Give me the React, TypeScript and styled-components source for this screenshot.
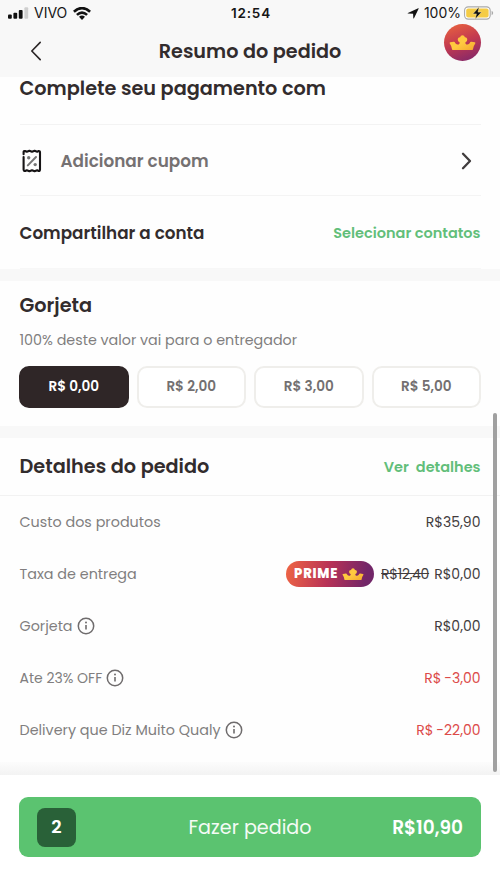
import React from 'react';
import styled, { createGlobalStyle } from 'styled-components';

const GlobalStyle = createGlobalStyle`
  * { box-sizing: border-box; }
  body { margin: 0; background: #fff; }
  button { font: inherit; border: 0; padding: 0; background: none; }
  svg { display: block; flex: none; }
`;

const Screen = styled.div`
  position: relative;
  display: flex;
  flex-direction: column;
  width: 500px;
  height: 889px;
  overflow: hidden;
  background: #fefefe;
  color: #322c2d;
  font-family: Poppins, Inter, sans-serif;
  white-space: pre;
`;

const Top = styled.header`
  position: relative;
  flex: none;
  height: 77px;
  background: #f8f8f8;
`;

const StatusBar = styled.div`
  display: grid;
  grid-template-columns: 1fr auto 1fr;
  align-items: center;
  height: 26px;
  padding: 0 6px 0 8px;
  color: #161616;
  font: 400 14px/26px Inter, sans-serif;
`;

const StatusGroup = styled.div<{ $end?: boolean }>`
  display: flex;
  align-items: center;
  justify-content: ${(p) => (p.$end ? 'flex-end' : 'flex-start')};
`;

const Carrier = styled.span`
  margin: 0 6px 0 5px;
`;

const Clock = styled.span`
  font-weight: 600;
  font-size: 13.5px;
  letter-spacing: 0.8px;
`;

const Charge = styled.span`
  margin: 0 3px 0 5px;
`;

const NavBar = styled.div`
  display: grid;
  grid-template-columns: 60px 1fr 60px;
  align-items: center;
  height: 51px;
`;

const BackButton = styled.button`
  display: flex;
  padding: 0 0 2px 29px;
`;

const PageTitle = styled.h1`
  margin: 0;
  text-align: center;
  font-size: 19.2px;
  line-height: 28px;
  font-weight: 600;
`;

const PrimeAvatar = styled.div`
  position: absolute;
  top: 24px;
  right: 19px;
  display: grid;
  place-items: center;
  width: 37px;
  height: 37px;
  border-radius: 50%;
  background: linear-gradient(160deg, #e8613f 5%, #c33a50 48%, #82276a 95%);
`;

const Content = styled.main`
  flex: none;
  height: 698px;
`;

const Section = styled.section`
  padding: 0 19.5px;
`;

const PaymentTitle = styled.h2`
  margin: 0;
  height: 48px;
  border-bottom: 1px solid #f3f3f3;
  font-size: 19.25px;
  line-height: 23px;
  font-weight: 600;
`;

const CouponRow = styled.div`
  display: flex;
  align-items: center;
  height: 71px;
  padding: 1px 8px 0 2px;
  border-bottom: 1px solid #f4f4f4;
`;

const CouponLabel = styled.span`
  flex: 1;
  margin-left: 19px;
  color: #757172;
  font-size: 16.85px;
  font-weight: 600;
`;

const ShareRow = styled.div`
  display: flex;
  align-items: center;
  justify-content: space-between;
  height: 73px;
  padding-top: 2px;
  border-bottom: 1px solid #f7f7f7;
  font-size: 16.8px;
  line-height: 24px;
  font-weight: 600;
`;

const LinkButton = styled.button`
  color: #62be7a;
  font-size: 14.5px;
  line-height: 22px;
  font-weight: 600;
  white-space: pre;
`;

const Separator = styled.div`
  height: 12px;
  background: #f8f8f8;
`;

const SectionTitle = styled.h2`
  margin: 0;
  font-size: 19.25px;
  line-height: 28px;
  font-weight: 600;
`;

const TipSection = styled(Section)`
  height: 145px;
  padding-top: 11px;
`;

const TipHint = styled.p`
  margin: 9px 0 15px;
  color: #817e7f;
  font-size: 14.3px;
  line-height: 22px;
`;

const TipOptions = styled.div`
  display: grid;
  grid-template-columns: repeat(4, 1fr);
  gap: 8px;
  margin: 0 -0.5px;
`;

const TipButton = styled.button<{ $selected?: boolean }>`
  height: 42px;
  border: 2px solid ${(p) => (p.$selected ? '#2f2627' : '#efeeeb')};
  border-radius: 10px;
  background: ${(p) => (p.$selected ? '#2f2627' : '#fff')};
  color: ${(p) => (p.$selected ? '#fff' : '#737071')};
  font-size: 13.6px;
  line-height: 20px;
  font-weight: 600;
`;

const DetailsHeader = styled.div`
  display: flex;
  align-items: center;
  justify-content: space-between;
  height: 58px;
  padding: 1px 19.5px 0;
  border-bottom: 1px solid #f2f2f2;
`;

const CostList = styled.div`
  height: 266px;
  padding: 0 19.5px;
`;

const CostRow = styled.div`
  display: flex;
  align-items: center;
  height: 52px;
  font-size: 14px;
  line-height: 22px;
`;

const CostLabel = styled.span<{ $tight?: boolean }>`
  display: flex;
  align-items: center;
  gap: 4px;
  flex: 1;
  color: #817e7f;
  font-size: ${(p) => (p.$tight ? 14 : 14.35)}px;
`;

const CostValue = styled.span<{ $discount?: boolean }>`
  color: ${(p) => (p.$discount ? '#dc4a49' : '#423c3d')};
  word-spacing: ${(p) => (p.$discount ? '-1px' : 'normal')};
`;

const OldPrice = styled.s`
  margin: 0 5px 0 7px;
  color: #423c3d;
  letter-spacing: -0.3px;
`;

const PrimeTag = styled.span`
  display: flex;
  align-items: center;
  gap: 4px;
  width: 88px;
  height: 26px;
  padding-left: 8px;
  border-radius: 13px;
  background: linear-gradient(100deg, #ef6544 0%, #b83256 48%, #722668 90%);
  color: #fff;
  font-size: 13px;
  font-weight: 800;
  letter-spacing: 0.8px;
`;

const FooterShade = styled.div`
  height: 13px;
  background: linear-gradient(#fcfcfc, #f3f3f3);
`;

const Footer = styled.footer`
  flex: 1;
  padding: 22px 19px 0;
  background: #fff;
`;

const OrderButton = styled.button`
  display: grid;
  grid-template-columns: 120px 1fr 120px;
  align-items: center;
  width: 462px;
  height: 60px;
  padding: 0 18px;
  border-radius: 9px;
  background: #5bc370;
  color: #fff;
  line-height: 28px;
`;

const ItemCount = styled.span`
  display: grid;
  place-items: center;
  width: 39px;
  height: 39px;
  border-radius: 8px;
  background: #296138;
  font-size: 18px;
  font-weight: 600;
`;

const OrderLabel = styled.span`
  padding-top: 2px;
  color: #f4fbf5;
  font-size: 19.15px;
`;

const OrderTotal = styled.span`
  padding-top: 2px;
  text-align: right;
  font-size: 18.5px;
  font-weight: 600;
`;

const ScrollThumb = styled.div`
  position: absolute;
  top: 413px;
  right: 3px;
  width: 4px;
  height: 359px;
  border-radius: 2px;
  background: #a0a0a0;
`;

const Crown = ({ width }: { width: number }) => (
  <svg width={width} height={(width * 16) / 28} viewBox="0 0 28 16">
    <defs>
      <linearGradient id="gold" x1="0" y1="0" x2="1" y2="1">
        <stop offset="0" stopColor="#ffc53a" />
        <stop offset="0.5" stopColor="#ffca40" />
        <stop offset="1" stopColor="#f5a52e" />
      </linearGradient>
    </defs>
    <path
      fill="url(#gold)"
      d="M1.2 7.6 4.9 7Q6 6.9 6.3 8Q7 9.8 8.8 9.8H10Q11.4 9.2 10.9 7.6Q8.4 6.4 9.3 3.6Q10 2.5 11.5 2.4Q12 .2 14 .2T16.5 2.4Q18 2.5 18.7 3.6Q19.6 6.4 17.1 7.6Q16.6 9.2 18 9.8H19.2Q21 9.8 21.7 8Q22 6.9 23.1 7L26.8 7.6Q27.7 8 27.1 9Q25.4 11.2 25 14.2Q24.8 15.8 23.5 15.8H4.5Q3.2 15.8 3 14.2Q2.6 11.2.9 9Q.3 8 1.2 7.6Z"
    />
  </svg>
);

const SignalIcon = () => (
  <svg width="21" height="12" viewBox="0 0 21 12" fill="#111">
    <rect x="0" y="7.6" width="3.8" height="4.2" rx="1" />
    <rect x="5.4" y="5.8" width="3.8" height="6" rx="1" />
    <rect x="10.8" y="3" width="3.8" height="8.8" rx="1" />
    <rect x="16.4" y="0.2" width="3.8" height="11.6" rx="1" fill="#cfcfcf" />
  </svg>
);

const WifiIcon = () => (
  <svg width="18" height="13" viewBox="0 0 18 13">
    <g fill="none" stroke="#111" strokeWidth="2.6">
      <path d="M.9 4.8Q9-2.6 17.1 4.8" />
      <path d="M3.9 7.9Q9 3.3 14.1 7.9" />
    </g>
    <path d="M6 9.8Q9 7.4 12 9.8L9 12.9Z" fill="#111" />
  </svg>
);

const LocationIcon = () => (
  <svg width="12" height="11" viewBox="0 0 12 11">
    <path d="M11.2.3Q11.9 0 11.6.8L7 10.3Q6.5 11 6.3 10.1L6.1 5.8 1 5.6Q.1 5.3.9 4.9Z" fill="#111" />
  </svg>
);

const BatteryIcon = () => (
  <svg width="30" height="14" viewBox="0 0 30 14">
    <rect x="0.6" y="0.9" width="25.6" height="12.2" rx="3.6" fill="#fff" stroke="#a9a9a9" strokeWidth="1.1" />
    <rect x="2.2" y="2.5" width="22.4" height="9" rx="2" fill="#f5cc45" />
    <path d="M27.6 4.8Q29.2 5.5 29.2 7T27.6 9.2Z" fill="#a9a9a9" />
    <path d="M15.2.8 8.8 7.9H12.4L11.2 13.2 17.6 6.1H14Z" fill="#111" stroke="#fbe9b0" strokeWidth=".5" />
  </svg>
);

const BackIcon = () => (
  <svg width="14" height="20" viewBox="0 0 14 20">
    <path d="M11.2 1.4 2.8 10 11.2 18.6" fill="none" stroke="#2b2627" strokeWidth="1.6" strokeLinecap="round" strokeLinejoin="round" />
  </svg>
);

const CouponIcon = () => (
  <svg width="20" height="24" viewBox="0 0 20 24" fill="none" strokeLinecap="round" strokeLinejoin="round">
    <path
      d="M1.6 5.2V3.1Q1.6 1.8 3 2L4.8 2.8 7.4 1.8 10 2.8 12.6 1.8 15.2 2.8 16.6 2Q18 1.8 18 3.4V20.6Q18 22.2 16.6 22L15.2 21.2 12.6 22.2 10 21.2 7.4 22.2 4.8 21.2 3.2 22Q1.6 22.2 1.6 20.6V8"
      stroke="#161415"
      strokeWidth="2.1"
    />
    <path d="M5.8 16.4 14 8" stroke="#777" strokeWidth="2" />
    <circle cx="6.7" cy="8.8" r="1.7" fill="#777" />
    <circle cx="13.2" cy="15.6" r="1.7" fill="#777" />
  </svg>
);

const ChevronIcon = () => (
  <svg width="12" height="20" viewBox="0 0 12 20">
    <path d="M2 2.8 9 10 2 17.2" fill="none" stroke="#403c3d" strokeWidth="2.3" strokeLinecap="round" strokeLinejoin="round" />
  </svg>
);

const InfoIcon = () => (
  <svg width="18" height="18" viewBox="0 0 18 18">
    <circle cx="9" cy="9" r="7.7" fill="none" stroke="#6f6c6d" strokeWidth="1.5" />
    <path d="M9 8V12.6" stroke="#6f6c6d" strokeWidth="1.6" />
    <circle cx="9" cy="5.6" r="1" fill="#6f6c6d" />
  </svg>
);

const tips = ['R$ 0,00', 'R$ 2,00', 'R$ 3,00', 'R$ 5,00'];

export default function App() {
  return (
    <Screen>
      <GlobalStyle />
      <Top>
        <StatusBar>
          <StatusGroup>
            <SignalIcon />
            <Carrier>VIVO</Carrier>
            <WifiIcon />
          </StatusGroup>
          <Clock>12:54</Clock>
          <StatusGroup $end>
            <LocationIcon />
            <Charge>100%</Charge>
            <BatteryIcon />
          </StatusGroup>
        </StatusBar>
        <NavBar>
          <BackButton aria-label="Voltar"><BackIcon /></BackButton>
          <PageTitle>Resumo do pedido</PageTitle>
        </NavBar>
        <PrimeAvatar><Crown width={27} /></PrimeAvatar>
      </Top>

      <Content>
        <Section>
          <PaymentTitle>Complete seu pagamento com</PaymentTitle>
          <CouponRow>
            <CouponIcon />
            <CouponLabel>Adicionar cupom</CouponLabel>
            <ChevronIcon />
          </CouponRow>
          <ShareRow>
            Compartilhar a conta
            <LinkButton>Selecionar contatos</LinkButton>
          </ShareRow>
        </Section>
        <Separator />

        <TipSection>
          <SectionTitle>Gorjeta</SectionTitle>
          <TipHint>100% deste valor vai para o entregador</TipHint>
          <TipOptions>
            {tips.map((tip, i) => (
              <TipButton key={tip} $selected={i === 0}>{tip}</TipButton>
            ))}
          </TipOptions>
        </TipSection>
        <Separator />

        <DetailsHeader>
          <SectionTitle>Detalhes do pedido</SectionTitle>
          <LinkButton>{'Ver  detalhes'}</LinkButton>
        </DetailsHeader>
        <CostList>
          <CostRow>
            <CostLabel>Custo dos produtos</CostLabel>
            <CostValue>R$35,90</CostValue>
          </CostRow>
          <CostRow>
            <CostLabel>Taxa de entrega</CostLabel>
            <PrimeTag>PRIME<Crown width={22} /></PrimeTag>
            <OldPrice>R$12,40</OldPrice>
            <CostValue>R$0,00</CostValue>
          </CostRow>
          <CostRow>
            <CostLabel>Gorjeta<InfoIcon /></CostLabel>
            <CostValue>R$0,00</CostValue>
          </CostRow>
          <CostRow>
            <CostLabel $tight>Ate 23% OFF<InfoIcon /></CostLabel>
            <CostValue $discount>R$ -3,00</CostValue>
          </CostRow>
          <CostRow>
            <CostLabel>Delivery que Diz Muito Qualy<InfoIcon /></CostLabel>
            <CostValue $discount>R$ -22,00</CostValue>
          </CostRow>
        </CostList>
        <FooterShade />
      </Content>

      <Footer>
        <OrderButton>
          <ItemCount>2</ItemCount>
          <OrderLabel>Fazer pedido</OrderLabel>
          <OrderTotal>R$10,90</OrderTotal>
        </OrderButton>
      </Footer>
      <ScrollThumb />
    </Screen>
  );
}
